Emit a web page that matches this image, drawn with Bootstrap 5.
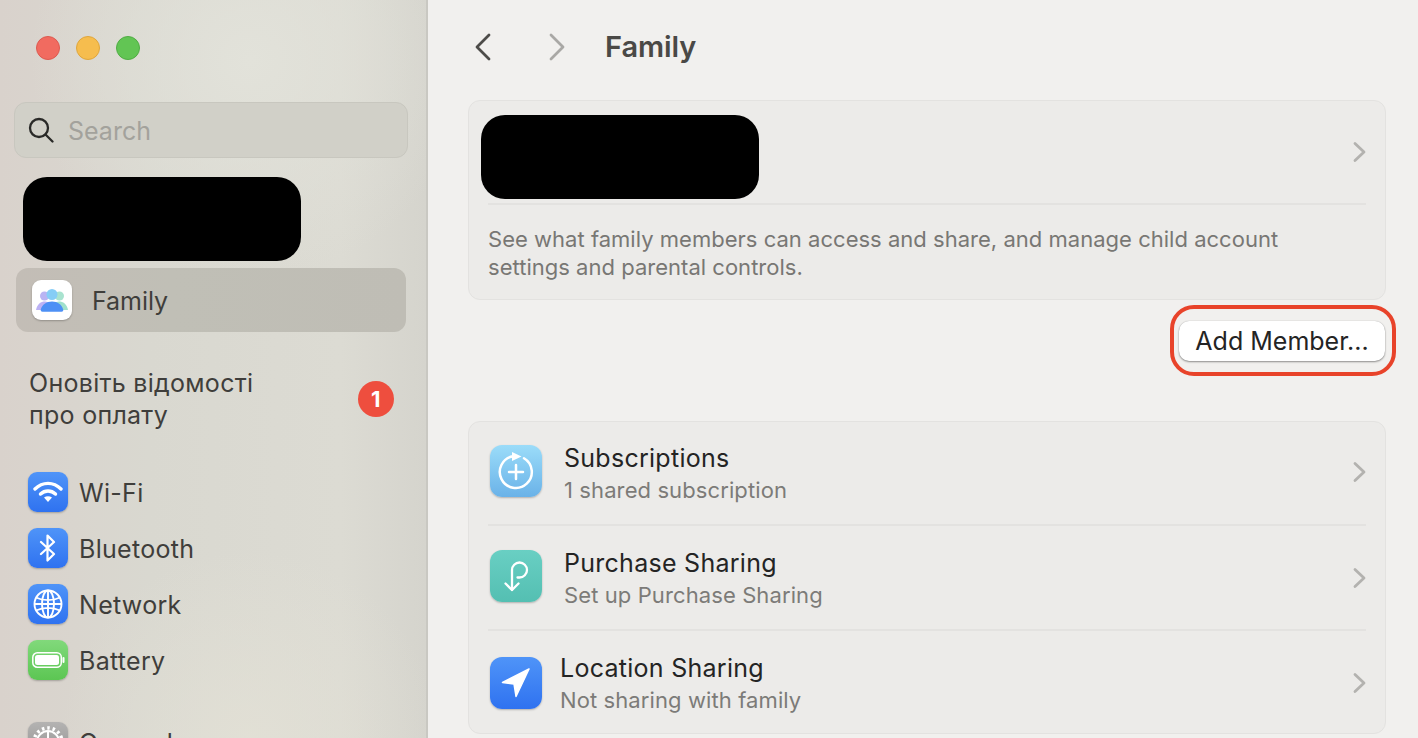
<!DOCTYPE html>
<html lang="en">
<head>
<meta charset="UTF-8">
<title>Family</title>
<link href="https://cdn.jsdelivr.net/npm/bootstrap@5.3.2/dist/css/bootstrap.min.css" rel="stylesheet">
<style>
  html, body { height: 738px; overflow: hidden; }
  body { font-family: Inter, "Noto Sans", sans-serif; background: #f1f0ee; color: #262626; }
  .shell { height: 738px; overflow: hidden; }
  .side {
    width: 428px; flex: none; height: 738px; overflow: hidden; color: #3f3e3b;
    border-right: 2px solid #c9c8c2;
    background:
      radial-gradient(circle at 250px 740px, rgba(227,225,214,.8) 0, rgba(227,225,214,0) 190px),
      radial-gradient(circle at 250px 60px, #e2e2da 0, rgba(226,226,218,0) 220px),
      linear-gradient(90deg, #d9d2cc 0, #d9d8d0 35%, #dcdbd3 80%, #d5d4cd 100%);
    padding: 36px 18px 0 14px;
  }
  .lights { gap: 16px; padding-left: 22px; height: 24px; }
  .dot { width: 24px; height: 24px; border-radius: 50%; border: 1px solid; }
  .search-box {
    height: 56px; margin-top: 42px; border-radius: 12px; padding-left: 13px; gap: 14px;
    background: #d1d0c8; border: 1px solid #c8c7bf; color: #a3a29c; font-size: 25px;
  }
  .txt-low { padding-top: 4px; }
  .redact { width: 278px; height: 84px; background: #000; border-radius: 24px; }
  .side .redact { margin: 19px 0 7px 9px; }
  .fam-row {
    height: 64px; margin-left: 2px; margin-right: 2px; padding-left: 16px; gap: 20px; border-radius: 12px;
    background: linear-gradient(90deg, #c3bdb6 0, #c0bfb6 40%, #bfbdb5 100%); font-size: 25px; letter-spacing: -.05px;
  }
  .app-ico { border-radius: 9px; flex: none; box-shadow: 0 1px 2px rgba(0,0,0,.25); }
  .ico40 { width: 40px; height: 40px; }
  .ico52 { width: 52px; height: 52px; border-radius: 12px; }
  .bg-white-ico { background: #fff; }
  .bg-blue { background: linear-gradient(#4f94f8, #2f72f0); }
  .bg-green { background: linear-gradient(#81d97b, #5cc653); }
  .bg-grey { background: linear-gradient(#b4b3b2, #8f8e8e); }
  .bg-sky { background: linear-gradient(#9bdcf9, #6ab2e8); }
  .bg-teal { background: linear-gradient(#69cfc3, #54bfb2); }
  .notice { margin-top: 35px; padding: 0 14px 0 15px; font-size: 25px; line-height: 32px; letter-spacing: .28px; }
  .num-dot {
    width: 36px; height: 36px; border-radius: 50%; background: #ee4e3e; color: #fff;
    font-weight: 700; font-size: 22px; line-height: 36px; text-align: center;
  }
  .side-list { margin-top: 41px; padding-left: 14px; gap: 16px; font-size: 25px; }
  .side-item { gap: 11px; height: 40px; letter-spacing: .3px; }
  .side-gap { margin-top: 26px; }
  .main-pane { padding: 0 32px 0 40px; min-width: 0; }
  .top-bar { height: 100px; padding-left: 1px; }
  .top-bar h1 { font-size: 29px; font-weight: 600; margin: -6px 0 0 34px; color: #4a4946; letter-spacing: -.1px; }
  .nav-arrows { gap: 42px; margin-top: -6px; }
  .pane-card { background: #ecebe9; border: 1px solid #e3e2e0; border-radius: 12px; }
  .acct-top { height: 102px; padding: 14px 17px 0 12px; }
  .chev-top { margin-top: 25px; }
  .rule { height: 2px; background: #e3e2e0; margin: 0 19px; }
  .acct-note { padding: 20px 60px 18px 19px; font-size: 22px; line-height: 28px; color: #787774; letter-spacing: .02px; }
  .btn-zone { height: 121px; padding-top: 5px; margin-right: -10px; }
  .red-ring { border: 4px solid #e8432a; border-radius: 24px; width: 226px; height: 71px; padding: 12px 7px 0 5px; }
  .btn-add {
    width: 206px; height: 40px; padding: 0; background: #fff; border: 0; border-radius: 10px; color: #242424;
    font-size: 25px; line-height: 36px; box-shadow: 0 1px 2px rgba(0,0,0,.4), 0 0 1px rgba(0,0,0,.25);
  }
  .btn-add:hover { background: #fff; color: #242424; }
  .share-row { padding-right: 17px; padding-left: 21px; gap: 22px; }
  .share-row.tight { gap: 18px; }
  .row-a { height: 102px; padding-top: 2px; }
  .row-b { height: 103px; padding-top: 3px; }
  .row-c { height: 102px; padding-top: 4px; }
  .ico-up6 { margin-top: -6px; }
  .ico-up2 { margin-top: -2px; }
  .chev-up { margin-top: -4px; }
  .chev-up2 { margin-top: -2px; }
  .share-title { font-size: 25px; line-height: 30px; color: #242424; letter-spacing: .27px; }
  .share-sub { font-size: 22px; line-height: 30px; color: #7c7b78; letter-spacing: .1px; margin-top: 2px; }
</style>
</head>
<body>
<div class="shell d-flex">

  <div class="side">
    <div class="lights d-flex">
      <span class="dot" style="background:#f16b60;border-color:#dd5a50"></span>
      <span class="dot" style="background:#f6bd4e;border-color:#e0a63c"></span>
      <span class="dot" style="background:#62c554;border-color:#50ad44"></span>
    </div>

    <div class="search-box d-flex align-items-center">
      <svg width="26" height="26" viewBox="0 0 26 26" fill="none" stroke="#2a2a28" stroke-width="2.3" stroke-linecap="round"><circle cx="11" cy="11" r="9"/><path d="M17.5 17.5 24.5 24.5"/></svg>
      <span class="txt-low">Search</span>
    </div>

    <div class="redact"></div>

    <div class="fam-row d-flex align-items-center">
      <span class="app-ico ico40 bg-white-ico d-flex align-items-center justify-content-center">
        <svg width="32" height="24" viewBox="0 0 32 24">
          <circle cx="8.500" cy="8" r="4.500" fill="#b9b4f3"/>
          <circle cx="23.500" cy="8" r="4.500" fill="#a9e3cf"/>
          <path d="M0 22c1-6 5-8.500 9-8.500s6 3 7 8.500z" fill="#bcb2f5"/>
          <path d="M32 22c-1-6-5-8.500-9-8.500s-6 3-7 8.500z" fill="#9fe0cc"/>
          <circle cx="16" cy="6.500" r="5.500" fill="#86cdf6"/>
          <path d="M6.500 23.700c-1.500 0-2-1-1.700-2.200C6 16.500 10.500 13.500 16 13.500s10 3 11.200 8c.3 1.200-.2 2.200-1.700 2.200z" fill="#4d90f5"/>
        </svg>
      </span>
      <span class="txt-low">Family</span>
    </div>

    <div class="notice d-flex justify-content-between align-items-center">
      <span>Оновіть відомості<br>про оплату</span>
      <span class="num-dot">1</span>
    </div>

    <div class="side-list d-flex flex-column">
      <div class="side-item d-flex align-items-center">
        <span class="app-ico ico40 bg-blue d-flex align-items-center justify-content-center">
          <svg width="30" height="22" viewBox="0 0 30 22" fill="none" stroke="#fff" stroke-width="3.400" stroke-linecap="round">
            <path d="M2 8C9.500 .5 20.500 .5 28 8"/><path d="M7.500 13c4.400-4 10.600-4 15 0"/>
            <path d="M11 16.500c2.500-1.800 5.500-1.800 8 0l-4 4.500z" fill="#fff" stroke="none"/>
          </svg>
        </span>
        <span class="txt-low">Wi-Fi</span>
      </div>
      <div class="side-item d-flex align-items-center">
        <span class="app-ico ico40 bg-blue d-flex align-items-center justify-content-center">
          <svg width="18" height="28" viewBox="0 0 18 28" fill="none" stroke="#fff" stroke-width="2.200" stroke-linecap="round" stroke-linejoin="round"><path d="M2 8 15 20 8.500 26.500V1.500L15 8 2 20"/></svg>
        </span>
        <span class="txt-low">Bluetooth</span>
      </div>
      <div class="side-item d-flex align-items-center">
        <span class="app-ico ico40 bg-blue d-flex align-items-center justify-content-center">
          <svg width="30" height="30" viewBox="0 0 30 30" fill="none" stroke="#fff" stroke-width="1.900"><circle cx="15" cy="15" r="13.500"/><ellipse cx="15" cy="15" rx="6" ry="13.500"/><path d="M3 8.500C10 12 20 12 27 8.500M1.500 15h27M3 21.500C10 18 20 18 27 21.500M15 1.500v27"/></svg>
        </span>
        <span class="txt-low">Network</span>
      </div>
      <div class="side-item d-flex align-items-center">
        <span class="app-ico ico40 bg-green d-flex align-items-center justify-content-center">
          <svg width="33" height="16" viewBox="0 0 33 16"><rect x=".8" y=".8" width="28.500" height="14.400" rx="4.500" fill="none" stroke="#fff" stroke-width="1.500"/><rect x="3" y="3" width="24" height="10" rx="2.500" fill="#fff"/><rect x="30.500" y="5" width="2" height="6" rx="1" fill="#fff"/></svg>
        </span>
        <span class="txt-low">Battery</span>
      </div>
      <div class="side-item side-gap d-flex align-items-center">
        <span class="app-ico ico40 bg-grey d-flex align-items-center justify-content-center">
          <svg width="32" height="32" viewBox="0 0 32 32" fill="none" stroke="#fff" stroke-width="2"><circle cx="16" cy="16" r="11"/><circle cx="16" cy="16" r="14" stroke-width="3.500" stroke-dasharray="2.500 2.900"/><circle cx="16" cy="16" r="3"/><path d="M16 5v8M6.500 21.500l7-4M25.500 21.500l-7-4"/></svg>
        </span>
        <span class="txt-low">General</span>
      </div>
    </div>
  </div>

  <div class="main-pane flex-grow-1">
    <div class="top-bar d-flex align-items-center">
      <div class="nav-arrows d-flex">
        <svg width="30" height="30" viewBox="0 0 30 30" fill="none" stroke="#4d4c49" stroke-width="2.800" stroke-linecap="round" stroke-linejoin="round"><path d="M20 3 8 15l12 12"/></svg>
        <svg width="30" height="30" viewBox="0 0 30 30" fill="none" stroke="#a9a8a5" stroke-width="2.800" stroke-linecap="round" stroke-linejoin="round"><path d="M10 3l12 12-12 12"/></svg>
      </div>
      <h1>Family</h1>
    </div>

    <div class="pane-card">
      <div class="acct-top d-flex justify-content-between align-items-start">
        <div class="redact"></div>
        <svg class="chev-top" width="16" height="24" viewBox="0 0 16 24" fill="none" stroke="#b3b2af" stroke-width="2.800" stroke-linecap="round" stroke-linejoin="round"><path d="M3 3.500 12 12l-9 8.500"/></svg>
      </div>
      <div class="rule"></div>
      <div class="acct-note">See what family members can access and share, and manage child account settings and parental controls.</div>
    </div>

    <div class="btn-zone d-flex justify-content-end align-items-start">
      <div class="red-ring">
        <button type="button" class="btn btn-add">Add Member...</button>
      </div>
    </div>

    <div class="pane-card">
      <div class="share-row row-a d-flex align-items-center">
        <span class="app-ico ico52 ico-up6 bg-sky d-flex align-items-center justify-content-center">
          <svg width="38" height="38" viewBox="0 0 38 38" fill="none" stroke="#fff" stroke-width="2.500" stroke-linecap="round"><path d="M16 4.200A16 16 0 1 0 27 6.200"/><path d="M15 0l9.500 4.500L15 9z" fill="#fff" stroke="none"/><path d="M19 13v14M12 20h14"/></svg>
        </span>
        <div class="flex-grow-1">
          <div class="share-title">Subscriptions</div>
          <div class="share-sub">1 shared subscription</div>
        </div>
        <svg class="chev-up" width="16" height="24" viewBox="0 0 16 24" fill="none" stroke="#b3b2af" stroke-width="2.800" stroke-linecap="round" stroke-linejoin="round"><path d="M3 3.500 12 12l-9 8.500"/></svg>
      </div>
      <div class="rule"></div>
      <div class="share-row row-b d-flex align-items-center">
        <span class="app-ico ico52 ico-up6 bg-teal d-flex align-items-center justify-content-center">
          <svg width="26" height="38" viewBox="0 0 26 38" fill="none" stroke="#fff" stroke-width="2.300" stroke-linecap="round" stroke-linejoin="round"><path d="M9 33V13a7.500 7.500 0 1 1 7.500 7.500h-2"/><path d="M2.500 26.500 9 33l6.500-6.500"/></svg>
        </span>
        <div class="flex-grow-1">
          <div class="share-title">Purchase Sharing</div>
          <div class="share-sub">Set up Purchase Sharing</div>
        </div>
        <svg class="chev-up2" width="16" height="24" viewBox="0 0 16 24" fill="none" stroke="#b3b2af" stroke-width="2.800" stroke-linecap="round" stroke-linejoin="round"><path d="M3 3.500 12 12l-9 8.500"/></svg>
      </div>
      <div class="rule"></div>
      <div class="share-row tight row-c d-flex align-items-center">
        <span class="app-ico ico52 ico-up2 bg-blue d-flex align-items-center justify-content-center">
          <svg width="30" height="30" viewBox="0 0 30 30"><path d="M28 1 1.500 14.500 13 16l2 12.500z" fill="#fff" stroke="#fff" stroke-width="1.500" stroke-linejoin="round"/></svg>
        </span>
        <div class="flex-grow-1">
          <div class="share-title">Location Sharing</div>
          <div class="share-sub">Not sharing with family</div>
        </div>
        <svg class="chev-up2" width="16" height="24" viewBox="0 0 16 24" fill="none" stroke="#b3b2af" stroke-width="2.800" stroke-linecap="round" stroke-linejoin="round"><path d="M3 3.500 12 12l-9 8.500"/></svg>
      </div>
    </div>
  </div>

</div>
</body>
</html>
